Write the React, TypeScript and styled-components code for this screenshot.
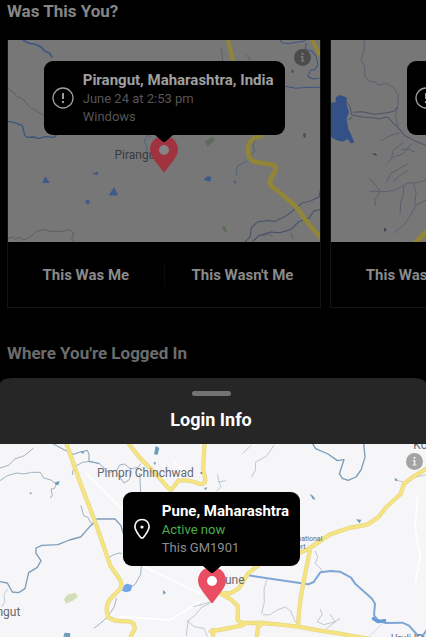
import React from "react";
import styled, { createGlobalStyle } from "styled-components";

const GlobalStyle = createGlobalStyle`
  *, *::before, *::after { box-sizing: border-box; }
  body {
    margin: 0;
    background: #000;
    font-family: Roboto, "Liberation Sans", sans-serif;
  }
  button { font: inherit; border: 0; padding: 0; background: none; cursor: pointer; }
  h1, h2, h3, p { margin: 0; }
`;

const Page = styled.div`
  display: flex;
  flex-direction: column;
  min-height: 100vh;
  overflow: hidden;
`;

const Backdrop = styled.main`
  background: #000;
`;

const SectionTitle = styled.h2<{ $faded?: boolean }>`
  padding: 0 7px;
  font-size: 17px;
  line-height: 22px;
  font-weight: 700;
  color: ${(p) => (p.$faded ? "#6c6c6c" : "#868686")};
`;

const Carousel = styled.div`
  display: flex;
  gap: 9px;
  padding: 18px 0 34px 7px;
  overflow-x: auto;
  scrollbar-width: none;
`;

const Card = styled.article`
  flex: 0 0 75%;
  border: 1px solid #141414;
  border-top: 0;
`;

const MapFrame = styled.div<{ $sheet?: boolean }>`
  position: relative;
  display: flex;
  flex-direction: column;
  align-items: center;
  overflow: hidden;
  flex: ${(p) => (p.$sheet ? "1" : "none")};
  min-height: ${(p) => (p.$sheet ? "193px" : "202px")};
  padding: ${(p) => (p.$sheet ? "48px 3px 0 0" : "21px 0 0")};
  background: ${(p) => (p.$sheet ? "#f6f6f9" : "#777778")};
`;

const MapArt = styled.svg`
  position: absolute;
  inset: 0;
  width: 100%;
  height: 100%;
  fill: none;
  stroke-linecap: round;
  stroke-linejoin: round;
  font-family: Roboto, "Liberation Sans", sans-serif;
`;

const InfoButton = styled.button<{ $sheet?: boolean }>`
  position: absolute;
  top: 9px;
  right: ${(p) => (p.$sheet ? "3px" : "9px")};
  width: 17px;
  height: 17px;
  color: ${(p) => (p.$sheet ? "#a3a3a3" : "#4c4c4c")};

  svg { display: block; }
`;

const Callout = styled.div`
  position: relative;
  display: flex;
  align-items: center;
  gap: 9px;
  height: 74px;
  padding: 0 11px 0 8px;
  border-radius: 9px;
  background: #000;
  white-space: nowrap;
`;

const CalloutTitle = styled.h3<{ $bright?: boolean }>`
  font-size: 15px;
  line-height: 20px;
  font-weight: 700;
  color: ${(p) => (p.$bright ? "#fff" : "#a0a0a0")};
`;

const CalloutLine = styled.p<{ $tone: "dim" | "gray" | "green" }>`
  font-size: 13px;
  line-height: 18px;
  color: ${(p) => ({ dim: "#565656", gray: "#8d8d8d", green: "#4fae4b" })[p.$tone]};
`;

const PinIcon = styled.svg`
  position: relative;
  display: block;
  flex: none;
`;

const Actions = styled.div`
  display: flex;
  align-items: center;
  height: 65px;
`;

const Action = styled.button`
  flex: 1;
  height: 22px;
  font-size: 15px;
  line-height: 22px;
  font-weight: 700;
  color: #8a8a8a;
  white-space: nowrap;

  & + & { border-left: 1px solid #0b0b0b; }
`;

const Sheet = styled.section`
  flex: 1;
  display: flex;
  flex-direction: column;
  margin-top: 14px;
  border-radius: 12px 12px 0 0 / 6px 6px 0 0;
  background: #262626;
`;

const SheetHeader = styled.header`
  display: flex;
  flex-direction: column;
  align-items: center;
  gap: 12px;
  height: 66px;
  padding: 13px 4px 0 0;
`;

const Handle = styled.div`
  width: 39px;
  height: 5px;
  border-radius: 3px;
  background: #737373;
`;

const SheetTitle = styled.h2`
  font-size: 18px;
  line-height: 24px;
  font-weight: 700;
  color: #fff;
`;

const Info = ({ sheet }: { sheet?: boolean }) => (
  <InfoButton $sheet={sheet} aria-label="Map information">
    <svg width="17" height="17" viewBox="0 0 17 17">
      <circle cx="8.5" cy="8.5" r="8.5" fill="currentColor" />
      <g fill={sheet ? "#f1f1f1" : "#7d7d7d"}>
        <circle cx="8.5" cy="4.8" r="1.1" />
        <path d="M6.8 7h2.5v4.6h1.1v1H6.6v-1h1.2V8h-1z" />
      </g>
    </svg>
  </InfoButton>
);

const AlertIcon = () => (
  <svg width="22" height="22" viewBox="0 0 22 22" fill="none" stroke="#9c9c9c">
    <circle cx="11" cy="11" r="10" strokeWidth="1.3" />
    <path d="M11 6v6" strokeWidth="2" />
    <circle cx="11" cy="15" r="1.2" fill="#9c9c9c" stroke="none" />
  </svg>
);

const PlaceIcon = () => (
  <svg width="22" height="22" viewBox="0 0 22 22" fill="none" stroke="#f5f5f5">
    <path
      d="M11 1.5c-4.2 0-7.1 3-7.1 6.9 0 3.3 2.1 6 4.6 9.6 1 1.4 1.5 2.2 2.5 2.2s1.5-.8 2.5-2.2c2.5-3.6 4.6-6.3 4.6-9.6 0-3.900-2.900-6.900-7.100-6.900z"
      strokeWidth="1.7"
    />
    <circle cx="11" cy="9" r="1.6" fill="#f5f5f5" stroke="none" />
  </svg>
);

const Pin = ({ bright }: { bright?: boolean }) => (
  <PinIcon width="28" height="38" viewBox="0 0 28 38">
    <path
      d="M14 1C6.300 1 0 6.800 0 14.500 0 19 2.500 22.500 5 26L13 36.500Q14 37.800 15 36.500L23 26C25.500 22.500 28 19 28 14.500 28 6.800 21.700 1 14 1z"
      fill={bright ? "#ea4e62" : "#a0333f"}
    />
    <circle cx="14" cy="15" r="5" fill={bright ? "#fff" : "#858585"} />
    <path d="M5 0h18l-7.500 6.500q-1.500 1.200-3 0z" fill="#000" />
  </PinIcon>
);

const PirangutMap = () => (
  <MapArt viewBox="24 120 936 606" preserveAspectRatio="xMidYMid slice" aria-hidden="true">
    <g stroke="#3d5580" strokeWidth="3">
      <path d="M70 121l16 9 20 3 18 8 9 12 15 6 8 12" strokeWidth="5" />
      <path d="M24 364l18 4 25 8 7 29 7 7 20-1 16 5 18-6 25 2 9-6" strokeWidth="4" />
      <path d="M841 120l4 9 20 2 19-3 24-3 10-7M852 258l34 7 25-2 48-1" />
      <path d="M918 130l-3 18 22 7 11 15 5 25-10 14-13 3-7 17 14 8 19-2" />
      <path d="M735 725l14-14 5-29 17-16 31-5 22 3 31-15 27-20 22-19 31-9 21-10 4-20M758 724l16-16 37-12 27 2 34-10 25-24 30-10 13-21 20-5" stroke="#414f68" />
      <path d="M440 406l12 4M440 408l-8 16 9 18-4 18" strokeWidth="2" />
      <path d="M770 409l-12 28 6 16-13 12-2 18M740 484l-28 14-4 22 1 6" strokeWidth="2" />
    </g>
    <g stroke="#505256" strokeWidth="2">
      <path d="M24 267l18 11 8 11 18 8 22 25 22 13 18 11M24 715l16-4 6 7 14-8 8 10 18-6 22-19 22-7 24 6 17-1 18 2 15-7 14 8 2 13-6 5 9 14M664 147l4 38" />
      <path d="M786 708l22-7 9 10M872 700l5 15M740 166l10 14" />
    </g>
    <g stroke="#928538" strokeLinecap="butt">
      <path d="M683 118l16 67M935 118l25 50" strokeWidth="12" />
      <path d="M786 405l-24 10q-16 10-19 30l4 26q8 16 32 17l38 6q14 5 8 18l-14 26q-5 14 6 23l30 24 38 32 38 52 45 52" strokeWidth="14" />
    </g>
    <g fill="#3d5a88">
      <path d="M126 549l10-20 13 20zM326 586l16-25 12 25zM275 520l20-5-2 11zM257 600h11v11h-11zM610 539l12-10 10 1v14h-9zM700 545l7-4-1 12z" />
    </g>
    <path d="M614 425l24-16 5 12-21 20zM664 681l10-3 8 18-7 2z" fill="#5f6c59" />
    <path d="M873 212l6-4 2 9-5 2zM908 401l8-2 1 12-6 3z" fill="#4b4b5b" />
    <text x="343" y="477" fontSize="36" fill="#373b43">Pirangut</text>
  </MapArt>
);

const LakeMap = () => (
  <MapArt viewBox="993 120 936 606" preserveAspectRatio="xMidYMid slice" aria-hidden="true">
    <path d="M993 308l14-1V292l14-7 20 8-2 18 8 25-7 20 5 32 9 17 9 23-11 2-9-13-15 8-20-5-15-9z" fill="#345187" />
    <g stroke="#4a5568" strokeWidth="2">
      <path d="M1093 120l-1 30-9 30 11 20 0 30 15 15 17 0 8 10 25-5 22 13 13 20 0 30-8 38 8 26" />
      <path d="M1040 308l10 12 5 25 32 6 30 2 20 3 25-5 32 32 22 25 28 14 42 18M1060 337l28-2 35 8 38-5 21-4 10-13M1055 352l-8 7" strokeWidth="3" />
      <path d="M1175 470l6-21 28-20M1198 398l-30 10-26 15M1162 490l16-18 30-10 28-32M1160 547l12-27 16-8 34-20M1180 545l18-18 26-16M1204 450l20-4 20 10" />
      <path d="M1107 534l18 20 16 20 20 1 25-6 18-9 22-12 19 1 24-6 20-8M1110 575l16-2 14 3-15 22 1 18M1211 560l-1 22-8 25-2 35M1278 600l-30 15-18 34-18 25-30 24M1240 550l8 28-4 34" />
    </g>
    <path d="M1247 728l28-30 40-28" stroke="#928538" strokeWidth="16" />
    <path d="M1117 459l11 2 3 6-9-2zM1151 686l6-3 2 9-6 3z" fill="#41415a" />
  </MapArt>
);

const PuneMap = () => (
  <MapArt viewBox="0 12 1278 579" preserveAspectRatio="xMidYMin slice" aria-hidden="true">
    <g stroke="#fff" strokeWidth="5">
      <path d="M258 100l110 110M420 375l180 85M360 530l150 10 90-55M520 60l40 46M1253 170l-8 90 15 90-14 80" />
    </g>
    <g stroke="#9fb2c0" strokeWidth="2">
      <path d="M0 122l22-15 28-8 22 3 23-5 26 0 10 17 22 6 16 12-6 14-10 1 4 18-5 8M0 84l26-8 18-19 29-10 28-23" strokeDasharray="9 2" strokeWidth="3" />
      <path d="M217 104l4-22 26-15 24-3 28 8 28 26 24-8 8-15 15-3 18 15 22-5 8-10M352 100l20 29 16-10 6-24M419 100l3 56M243 197l8 30 13 5 8 17 14 1M322 356l15-10 20-7 8 1M424 378l-2 25-16 29-24 18M349 475l-6 25-12 18-18 22-30 24" strokeWidth="3" />
      <path d="M22 448l-10 15 2 22-8 14M628 490l-24 13-20 24-20 16-5 44M562 542l20 18 30 5 10 24M580 500l52-14" />
      <path d="M729 39l24-22M755 110l11-19 1-25 33-18 22-32M653 104l3 18 7 18-12 12M656 126l20-4" />
      <path d="M800 420l-8 28 1 38-8 34M790 524l18 1 26-16 22-8 16 12 14 33 14-2M946 334l7 18-7 19 16 14 5 10M961 508l5 16-14 21 19 9 35-9-16-22M1020 535l-40 30M1278 104l-38 9-30 13-22-6" />
      <path d="M1113 584l38-37" stroke="#b4cce5" />
    </g>
    <g stroke="#7c9db8" strokeWidth="4">
      <path d="M160 12l34 18 27 13 17-6 24-6 5 12 0 22 31 5" strokeWidth="3" />
      <path d="M0 425l22 4 15 27 19 2 19-12 11-48 26-16 11-20-15-22 0-16 18-8 48-2 34-14 34-9 28-32 17-14M290 237h55l18 20 6 22" />
      <path d="M939 13l8 13 37 16 28 20 20-3-14 42 9 14 17 6 24-10 15-21 12-38-4-42" />
    </g>
    <path d="M745 406l93 14 87 13 16-7 20-29 31-4 28 2 33 18 14 20 24 21 25 22 9 15-3 35 10 13 25 10 50-1 20 9 25 28 18 0 28-41" stroke="#7fa5d5" strokeWidth="6" />
    <path d="M1120 536l14 9 20-3" stroke="#659bd8" strokeWidth="10" />
    {[["#e4d78b", 13], ["#f6e481", 9]].map(([color, width]) => (
      <g key={color} stroke={color as string} strokeWidth={width as number}>
        <path d="M198 8l8 22 34 97 48 125 43 125 29 42q8 14 0 28l-30 31q-17 24-5 54 18 14 60 12 21 3 19 22l-12 24" />
        <path d="M384 8l33 43 48 48 38 43 10 8 22-28q34-4 64 10 20 2 16-20l-6-24 5-80" />
        <path d="M1290 80l-48 29-30 22-10 31-43 39-23 30-34 23-56 10-57 20-62 42-32 14-25-4M929 334l-14 70-13 68-5 46-3 38" />
        <path d="M774 376l-30 25-28 45-24 13-30 2 32 18 20 20-1 42 14 8h60l55 5 52 6 66 12 56 8 50 10 84 12M632 574l58-10 36-8 12-8M788 548l-14 14-4 32" />
        <path d="M639 570v30" />
      </g>
    ))}
    <path d="M192 478l10-14 24-6 8 12-16 12-20 9z" fill="#d0dfb6" />
    <path d="M372 436l9-5 15 4-3 17-13 5-14-4z" fill="#72a5e7" />
    <path d="M467 18l11 6-5 20-11-1zM460 68l8-3-3 11zM165 127l14-4-4 12-8-1zM190 590l4-12 17 2-1 11zM241 33l13 2-6 7zM489 449l9 9-8 6zM612 144l10-2-5 9zM929 161l10 6 8 12-9-2zM1184 113l11 8-10 2zM1068 238l16 1-5 11z" fill="#6b9dbb" />
    <circle cx="92" cy="160" r="3" fill="#899dba" />
    <circle cx="604" cy="99" r="3" fill="#777d84" />
    <g fill="#666970">
      <text x="291" y="112" fontSize="36">Pimpri Chinchwad</text>
      <text x="61" y="529" fontSize="36" textAnchor="end">Pirangut</text>
      <text x="652" y="431" fontSize="36">Pune</text>
      <text x="1240" y="28" fontSize="36">Koregaon</text>
      <text x="967" y="303" fontSize="21" textAnchor="end">Pune International</text>
      <text x="917" y="327" fontSize="21" textAnchor="end">Airport</text>
      <text x="1173" y="607" fontSize="30">Uruli Kanchan</text>
    </g>
  </MapArt>
);

type LoginCardProps = { place: string; time: string; device: string; map: React.ReactNode };

const LoginCard = ({ place, time, device, map }: LoginCardProps) => (
  <Card>
    <MapFrame>
      {map}
      <Callout>
        <AlertIcon />
        <div>
          <CalloutTitle>{place}</CalloutTitle>
          <CalloutLine $tone="dim">{time}</CalloutLine>
          <CalloutLine $tone="dim">{device}</CalloutLine>
        </div>
      </Callout>
      <Pin />
      <Info />
    </MapFrame>
    <Actions>
      <Action>This Was Me</Action>
      <Action>This Wasn't Me</Action>
    </Actions>
  </Card>
);

export default function App() {
  return (
    <Page>
      <GlobalStyle />
      <Backdrop>
        <SectionTitle>Was This You?</SectionTitle>
        <Carousel>
          <LoginCard
            place="Pirangut, Maharashtra, India"
            time="June 24 at 2:53 pm"
            device="Windows"
            map={<PirangutMap />}
          />
          <LoginCard place="Pune, India" time="June 24 at 2:53 pm" device="Windows" map={<LakeMap />} />
        </Carousel>
        <SectionTitle $faded>Where You're Logged In</SectionTitle>
      </Backdrop>
      <Sheet role="dialog" aria-label="Login Info">
        <SheetHeader>
          <Handle />
          <SheetTitle>Login Info</SheetTitle>
        </SheetHeader>
        <MapFrame $sheet>
          <PuneMap />
          <Callout>
            <PlaceIcon />
            <div>
              <CalloutTitle $bright>Pune, Maharashtra</CalloutTitle>
              <CalloutLine $tone="green">Active now</CalloutLine>
              <CalloutLine $tone="gray">This GM1901</CalloutLine>
            </div>
          </Callout>
          <Pin bright />
          <Info sheet />
        </MapFrame>
      </Sheet>
    </Page>
  );
}
